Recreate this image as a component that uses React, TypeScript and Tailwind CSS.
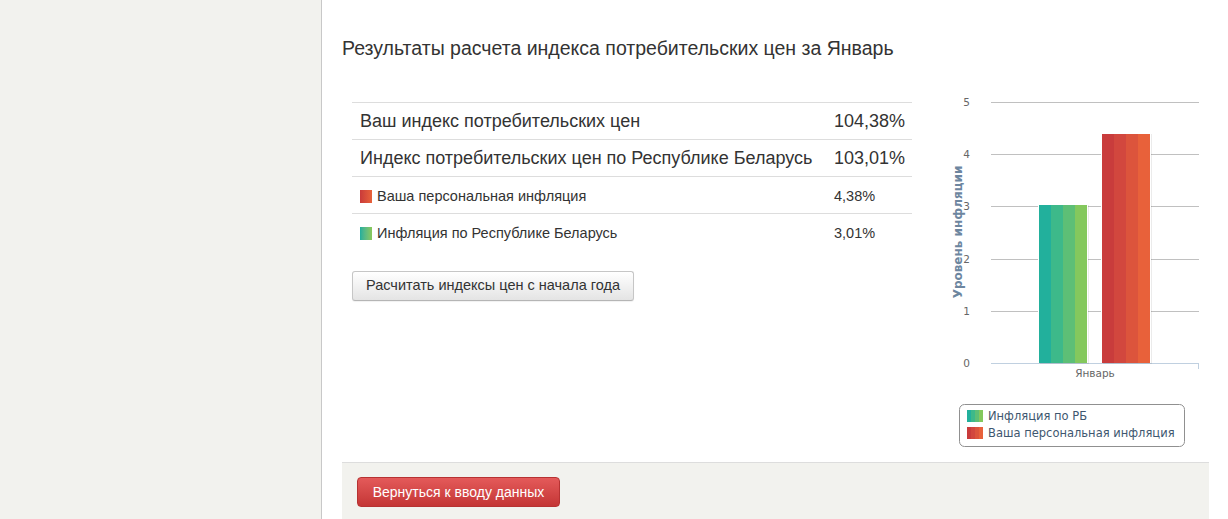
import React from "react"

const rows = [
  { label: "Ваш индекс потребительских цен", value: "104,38%", big: true },
  { label: "Индекс потребительских цен по Республике Беларусь", value: "103,01%", big: true },
  { label: "Ваша персональная инфляция", value: "4,38%", swatch: "red" },
  { label: "Инфляция по Республике Беларусь", value: "3,01%", swatch: "green" },
]

const green = ["#22b09c", "#3db98a", "#5dbf76", "#84c85d"]
const red = ["#c93c3c", "#d2473e", "#dc543c", "#e8613a"]

function Swatch({ kind }: { kind: string }) {
  const cls =
    kind === "red"
      ? "bg-gradient-to-r from-[#c93a3a] to-[#e8623a]"
      : "bg-gradient-to-r from-[#1fae9c] to-[#8ac85a]"
  return <span className={`inline-block h-[13px] w-[12px] ${cls}`} />
}

function Bar({ x, top, colors }: { x: number; top: number; colors: string[] }) {
  const h = 273 - top
  return (
    <g>
      <rect x={x + 1} y={top} width={49} height={h + 1} fill="#000" opacity={0.08} />
      <rect x={x - 1} y={top - 1} width={50} height={h + 1} fill="#fff" />
      {colors.map((c, i) => (
        <rect key={i} x={x + i * 12} y={top} width={12} height={h} fill={c} />
      ))}
    </g>
  )
}

function Chart() {
  const grid = [
    { v: "5", y: 12 },
    { v: "4", y: 64 },
    { v: "3", y: 116 },
    { v: "2", y: 169 },
    { v: "1", y: 221 },
  ]
  return (
    <svg width="269" height="362" className="block" style={{ fontFamily: "'DejaVu Sans', Verdana, sans-serif" }}>
      {grid.map((g) => (
        <g key={g.v}>
          <line x1={51} x2={259} y1={g.y + 0.5} y2={g.y + 0.5} stroke="#c0c0c0" />
          <text x={30} y={g.y + 4} textAnchor="end" fontSize="10.5" fill="#666">
            {g.v}
          </text>
        </g>
      ))}
      <line x1={51} x2={259} y1={273.5} y2={273.5} stroke="#c0d0e0" />
      <line x1={258.5} x2={258.5} y1={273} y2={279} stroke="#c0d0e0" />
      <text x={30} y={277} textAnchor="end" fontSize="10.5" fill="#666">
        0
      </text>
      <text
        x={0}
        y={0}
        transform="translate(22 142) rotate(-90)"
        textAnchor="middle"
        fontSize="12"
        fontWeight="bold"
        fill="#6d869f"
      >
        Уровень инфляции
      </text>
      <Bar x={99} top={115} colors={green} />
      <Bar x={162} top={44} colors={red} />
      <text x={155} y={287} textAnchor="middle" fontSize="10.5" fill="#666">
        Январь
      </text>
      <rect x={19.5} y={314.5} width={225} height={42} rx={5} fill="#fff" stroke="#909090" />
      {green.map((c, i) => (
        <rect key={"lg" + i} x={27 + i * 4} y={320} width={4} height={12} fill={c} />
      ))}
      {red.map((c, i) => (
        <rect key={"lr" + i} x={27 + i * 4} y={337} width={4} height={12} fill={c} />
      ))}
      <text x={48} y={330} fontSize="11.5" fill="#3e576f">
        Инфляция по РБ
      </text>
      <text x={48} y={347} fontSize="11.5" fill="#3e576f">
        Ваша персональная инфляция
      </text>
    </svg>
  )
}

export default function App() {
  return (
    <div className="flex h-[519px] overflow-hidden bg-white font-['Liberation_Sans',Arial,sans-serif] text-[#333]">
      <aside className="w-[322px] shrink-0 border-r border-[#c8c8c8] bg-[#f2f2ee]" />
      <main className="flex min-w-0 flex-1 flex-col pl-[20px] pr-[19px]">
        <h1 className="mt-[36px] text-[19.5px] leading-[24px] text-[#333]">
          Результаты расчета индекса потребительских цен за Январь
        </h1>
        <div className="mt-[30px] flex">
          <div className="w-[570px] shrink-0 pl-[10px] pt-[12px]">
            <table className="w-[560px] border-collapse">
              <tbody>
                {rows.map((r) => (
                  <tr key={r.label} className="h-[37px] border-t border-[#dddddd]">
                    <td className={`pl-[8px] ${r.big ? "pt-[1px] text-[18px]" : "pt-[3px] text-[14.5px]"}`}>
                      <span className="flex items-center gap-[5px]">
                        {r.swatch && <Swatch kind={r.swatch} />}
                        {r.label}
                      </span>
                    </td>
                    <td className={`w-[86px] pl-[8px] ${r.big ? "pt-[1px] text-[18px]" : "pt-[3px] text-[14.5px]"}`}>
                      {r.value}
                    </td>
                  </tr>
                ))}
              </tbody>
            </table>
            <button className="mt-[20px] h-[30px] w-[282px] rounded-[3px] border border-[#c6c6c6] border-b-[#b5b5b5] bg-gradient-to-b from-[#ffffff] to-[#e4e4e4] text-[14.5px] text-[#333] shadow-[0_1px_1px_rgba(0,0,0,0.06)]">
              Расчитать индексы цен с начала года
            </button>
          </div>
          <div className="ml-[28px]">
            <Chart />
          </div>
        </div>
        <footer className="mt-[10px] flex-1 border-t border-[#dddddd] bg-[#f2f2ee] pl-[15px] pt-[14px]">
          <button className="h-[30px] w-[203px] rounded-[4px] border border-[#b73232] bg-gradient-to-b from-[#e45a5a] to-[#c43535] text-[14px] text-white">
            Вернуться к вводу данных
          </button>
        </footer>
      </main>
    </div>
  )
}
